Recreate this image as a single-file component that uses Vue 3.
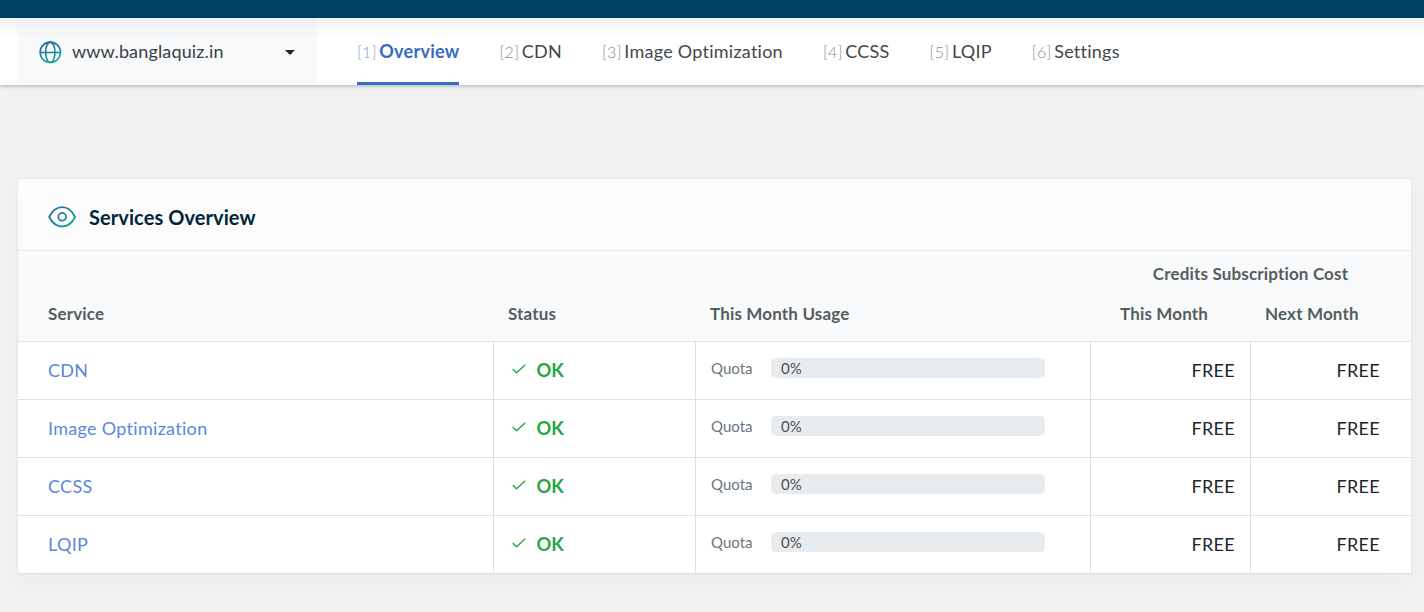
<script setup>
const tabs = ['Overview', 'CDN', 'Image Optimization', 'CCSS', 'LQIP', 'Settings']
const services = [
  { name: 'CDN', usage: 0 },
  { name: 'Image Optimization', usage: 0 },
  { name: 'CCSS', usage: 0 },
  { name: 'LQIP', usage: 0 },
]
</script>

<template>
  <div class="page">
    <div class="topbar"></div>
    <header class="nav">
      <div class="domain">
        <svg class="globe" width="24" height="24" viewBox="0 0 24 24" fill="none" stroke="url(#globe-grad)" stroke-width="1.6">
          <defs>
            <linearGradient id="globe-grad" gradientUnits="userSpaceOnUse" x1="4" y1="2" x2="18" y2="22">
              <stop offset="0" stop-color="#2a62a5" />
              <stop offset="1" stop-color="#0fa596" />
            </linearGradient>
          </defs>
          <circle cx="12.3" cy="12.3" r="10.2" />
          <ellipse cx="12.3" cy="12.3" rx="4.7" ry="10.2" />
          <path d="M2.100 12.500H22.500" />
        </svg>
        <span class="domain-name">www.banglaquiz.in</span>
        <span class="caret"></span>
      </div>
      <nav class="tabs">
        <a v-for="(tab, i) in tabs" :key="tab" class="tab" :class="{ active: i === 0 }">
          <span class="num">[{{ i + 1 }}]</span><span class="label">{{ tab }}</span>
        </a>
      </nav>
    </header>

    <section class="card">
      <div class="card-head">
        <svg class="eye" width="28" height="22" viewBox="0 0 28 22" fill="none" stroke="url(#eye-grad)" stroke-width="1.8">
          <defs>
            <linearGradient id="eye-grad" gradientUnits="userSpaceOnUse" x1="4" y1="0" x2="24" y2="22">
              <stop offset="0" stop-color="#2a66a5" />
              <stop offset="1" stop-color="#0fa596" />
            </linearGradient>
          </defs>
          <path d="M1.200 11C4.500 4.500 9 1.200 14.200 1.200S23.800 4.500 27.100 11C23.800 17.500 19.200 20.500 14.200 20.500S4.500 17.500 1.200 11Z" stroke-linejoin="round" />
          <circle cx="14.2" cy="10.8" r="3.9" />
        </svg>
        <h2>Services Overview</h2>
      </div>

      <div class="table">
        <div class="row thead">
          <div class="cell">Service</div>
          <div class="cell">Status</div>
          <div class="cell">This Month Usage</div>
          <div class="costs">
            <div class="cost-title">Credits Subscription Cost</div>
            <div class="cost-this">This Month</div>
            <div class="cost-next">Next Month</div>
          </div>
        </div>
        <div v-for="s in services" :key="s.name" class="row body-row">
          <div class="cell"><a class="link">{{ s.name }}</a></div>
          <div class="cell status">
            <svg width="14" height="10" viewBox="0 0 14 10" fill="none" stroke="#28a745" stroke-width="1.4">
              <path d="M0.700 5.100L4.500 8.800L13.300 0.700" />
            </svg>
            <b>OK</b>
          </div>
          <div class="cell usage">
            <span class="quota">Quota</span>
            <div class="bar">
              <div class="fill" :style="{ width: s.usage + '%' }"></div>
              <span class="pct">{{ s.usage }}%</span>
            </div>
          </div>
          <div class="cell free">FREE</div>
          <div class="cell free last">FREE</div>
        </div>
      </div>
    </section>
  </div>
</template>

<style>
body {
  margin: 0;
  background: #f2f2f2;
  overflow: hidden;
}
</style>

<style scoped>
.page {
  box-sizing: border-box;
  height: 612px;
  overflow: hidden;
  background: #f2f2f2;
  font-family: Lato, "Liberation Sans", sans-serif;
  font-size: 18px;
  font-variant-ligatures: none;
  color: #212529;
}
.topbar {
  height: 18px;
  background: #004262;
}
.nav {
  display: flex;
  height: 67px;
  padding-left: 17px;
  background: linear-gradient(rgba(0, 0, 0, 0.05), rgba(0, 0, 0, 0) 22px), #fff;
  box-shadow: 0 1px 4px rgba(0, 0, 0, 0.28);
}
.domain {
  box-sizing: border-box;
  display: flex;
  align-items: center;
  width: 300px;
  padding: 0 21px;
  background: linear-gradient(rgba(0, 0, 0, 0.04), rgba(0, 0, 0, 0) 22px), #f7f9fb;
  color: #3a3f44;
}
.globe {
  margin-top: 1px;
}
.domain-name {
  margin: 0 0 2px 10px;
  letter-spacing: 0.15px;
}
.caret {
  margin: 2px 1px 0 auto;
  border: 5px solid transparent;
  border-top-color: #212529;
  border-bottom: 0;
}
.tabs {
  display: flex;
  gap: 40px;
  margin-left: 40px;
}
.tab {
  box-sizing: border-box;
  display: flex;
  align-items: baseline;
  gap: 2.500px;
  height: 67px;
  line-height: 67px;
  white-space: nowrap;
  color: #444748;
}
.label {
  letter-spacing: 0.25px;
}
.num {
  font-size: 16px;
  font-weight: 300;
  letter-spacing: 0.35px;
  color: #8c8c8c;
}
.active {
  border-bottom: 3px solid #366bc3;
  color: #366bc3;
}
.active .label {
  font-weight: 700;
}
.active .num {
  color: #7fa3de;
}
.card {
  box-sizing: border-box;
  width: 1395px;
  margin: 93px 0 0 17px;
  border: 1px solid #e5e7e8;
  background: #fff;
  box-shadow: 0 8px 26px rgba(0, 40, 30, 0.04);
}
.card-head {
  display: flex;
  align-items: center;
  height: 71px;
  padding-left: 30px;
  background: #fcfcfc;
  border-bottom: 1px solid #e4e7e9;
}
.eye {
  margin-top: 4px;
}
h2 {
  margin: 4px 0 0 13px;
  font-size: 20px;
  font-weight: 700;
  line-height: 24px;
  letter-spacing: 0.08px;
  color: #00263a;
}
.row {
  box-sizing: border-box;
  display: grid;
  grid-template-columns: 476px 202px 395px 160px 160px;
  height: 58px;
  border-bottom: 1px solid #dee2e6;
}
.thead {
  height: 91px;
  background: #f9fafc;
  font-size: 17px;
  font-weight: 700;
  line-height: 20px;
  letter-spacing: 0.16px;
  color: #555e5e;
}
.thead .cell {
  padding: 53px 0 0 14px;
}
.thead .cell:first-child {
  padding-left: 30px;
}
.costs {
  grid-column: 4 / 6;
  display: grid;
  grid-template-columns: 159px 1fr;
  grid-template-rows: 40px 40px;
  padding: 13px 0 0;
  white-space: nowrap;
}
.cost-title {
  grid-column: 1 / 3;
  padding-right: 1px;
  text-align: center;
}
.cost-this {
  padding-left: 29px;
}
.cost-next {
  padding-left: 15px;
}
.body-row .cell {
  box-sizing: border-box;
  display: flex;
  align-items: center;
  padding: 0 15px 2px;
  border-right: 1px solid #dee2e6;
}
.body-row .cell:first-child {
  padding-left: 30px;
}
.body-row .last {
  padding-right: 31px;
  border-right: 0;
}
.link {
  color: #5c87d9;
  letter-spacing: 0.3px;
}
.body-row .status {
  gap: 11px;
  padding-left: 15.500px;
  color: #28a745;
}
.status svg {
  margin: 0 0 1px 2px;
}
.status b {
  font-size: 18.300px;
}
.body-row .usage {
  padding-bottom: 5px;
}
.quota {
  width: 60px;
  font-size: 15px;
  color: #6c757d;
}
.bar {
  display: flex;
  align-items: center;
  width: 274px;
  height: 20px;
  border-radius: 5px;
  background: #e9ecef;
  overflow: hidden;
}
.fill {
  height: 100%;
  background: #28a745;
}
.pct {
  padding-left: 10px;
  font-size: 15px;
  color: #495057;
}
.body-row .free {
  justify-content: flex-end;
  letter-spacing: 0.3px;
}
</style>
